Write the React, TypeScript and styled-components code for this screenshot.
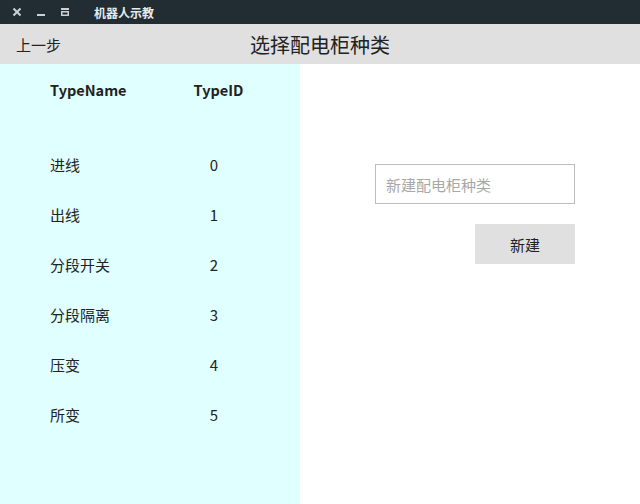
import React from "react";
import styled, { createGlobalStyle } from "styled-components";

const Global = createGlobalStyle`
  html, body { margin: 0; padding: 0; }
  body {
    width: 640px; height: 504px; overflow: hidden;
    font-family: "Noto Sans CJK SC", "Noto Sans", sans-serif;
    background: #ffffff;
  }
  * { box-sizing: border-box; }
`;

const Window = styled.div`
  width: 640px;
  height: 504px;
  display: flex;
  flex-direction: column;
`;

const TitleBar = styled.div`
  height: 24px;
  background: #222d33;
  display: flex;
  align-items: center;
  padding-left: 12px;
  flex-shrink: 0;
`;

const TitleButtons = styled.div`
  display: flex;
  align-items: center;
  gap: 14px;
`;

const IconBox = styled.span`
  width: 10px;
  height: 10px;
  display: inline-flex;
  svg { display: block; }
`;

const WindowTitle = styled.span`
  margin-left: 24px;
  color: #e4ebee;
  font-size: 12px;
  font-weight: 700;
  font-family: "Noto Sans CJK SC", sans-serif;
`;

const Header = styled.div`
  height: 40px;
  background: #e0e0e0;
  position: relative;
  display: flex;
  align-items: center;
  justify-content: center;
  flex-shrink: 0;
`;

const BackButton = styled.button`
  position: absolute;
  left: 16px;
  top: 0;
  height: 40px;
  border: none;
  background: transparent;
  padding: 0;
  font-family: "Noto Sans CJK SC", sans-serif;
  font-size: 15px;
  color: #222;
`;

const PageTitle = styled.h1`
  margin: 0;
  font-weight: 400;
  font-size: 20px;
  color: #222;
  font-family: "Noto Sans CJK SC", sans-serif;
`;

const Body = styled.div`
  flex: 1;
  display: flex;
`;

const LeftPanel = styled.div`
  width: 300px;
  background: #e0ffff;
  padding-left: 50px;
  display: flex;
  flex-direction: column;
`;

const Row = styled.div<{ $head?: boolean }>`
  height: 50px;
  display: grid;
  grid-template-columns: 114px 100px;
  align-items: center;
  font-size: ${(p) => (p.$head ? "14.5px" : "15px")};
  color: #222;
  font-weight: ${(p) => (p.$head ? 700 : 400)};
  margin-bottom: ${(p) => (p.$head ? "25px" : "0")};
  font-family: "Noto Sans CJK SC", sans-serif;
`;

const NameCell = styled.span``;

const IdCell = styled.span<{ $head?: boolean }>`
  text-align: center;
  padding-left: ${(p) => (p.$head ? "9px" : "0")};
`;

const RightPanel = styled.div`
  flex: 1;
  display: flex;
  flex-direction: column;
  align-items: flex-start;
  padding-left: 75px;
  padding-top: 100px;
`;

const Input = styled.input`
  width: 200px;
  height: 40px;
  border: 1px solid #bdbdbd;
  padding: 0 10px;
  font-size: 15px;
  font-family: "Noto Sans CJK SC", sans-serif;
  color: #222;
  outline: none;
  background: #fff;
  &::placeholder { color: #a8a8a8; }
`;

const CreateButton = styled.button`
  margin-top: 20px;
  margin-left: 100px;
  width: 100px;
  height: 40px;
  border: none;
  background: #e0e0e0;
  font-size: 15px;
  font-family: "Noto Sans CJK SC", sans-serif;
  color: #222;
`;

const types = [
  { name: "进线", id: 0 },
  { name: "出线", id: 1 },
  { name: "分段开关", id: 2 },
  { name: "分段隔离", id: 3 },
  { name: "压变", id: 4 },
  { name: "所变", id: 5 },
];

export default function App() {
  return (
    <>
      <Global />
      <Window>
        <TitleBar>
          <TitleButtons>
            <IconBox>
              <svg width="10" height="10" viewBox="0 0 10 10">
                <path d="M1.5 1.5 L8.5 8.5 M8.5 1.5 L1.5 8.5" stroke="#c9d1d5" strokeWidth="2" />
              </svg>
            </IconBox>
            <IconBox>
              <svg width="10" height="10" viewBox="0 0 10 10">
                <rect x="1" y="7" width="8" height="2" fill="#c9d1d5" />
              </svg>
            </IconBox>
            <IconBox>
              <svg width="10" height="10" viewBox="0 0 10 10">
                <rect x="1" y="1" width="8" height="2" fill="#c9d1d5" />
                <rect x="1.75" y="4.75" width="6.5" height="3.5" fill="none" stroke="#c9d1d5" strokeWidth="1.5" />
              </svg>
            </IconBox>
          </TitleButtons>
          <WindowTitle>机器人示教</WindowTitle>
        </TitleBar>
        <Header>
          <BackButton>上一步</BackButton>
          <PageTitle>选择配电柜种类</PageTitle>
        </Header>
        <Body>
          <LeftPanel>
            <Row $head>
              <NameCell>TypeName</NameCell>
              <IdCell $head>TypeID</IdCell>
            </Row>
            {types.map((t) => (
              <Row key={t.id}>
                <NameCell>{t.name}</NameCell>
                <IdCell>{t.id}</IdCell>
              </Row>
            ))}
          </LeftPanel>
          <RightPanel>
            <Input placeholder="新建配电柜种类" />
            <CreateButton>新建</CreateButton>
          </RightPanel>
        </Body>
      </Window>
    </>
  );
}
